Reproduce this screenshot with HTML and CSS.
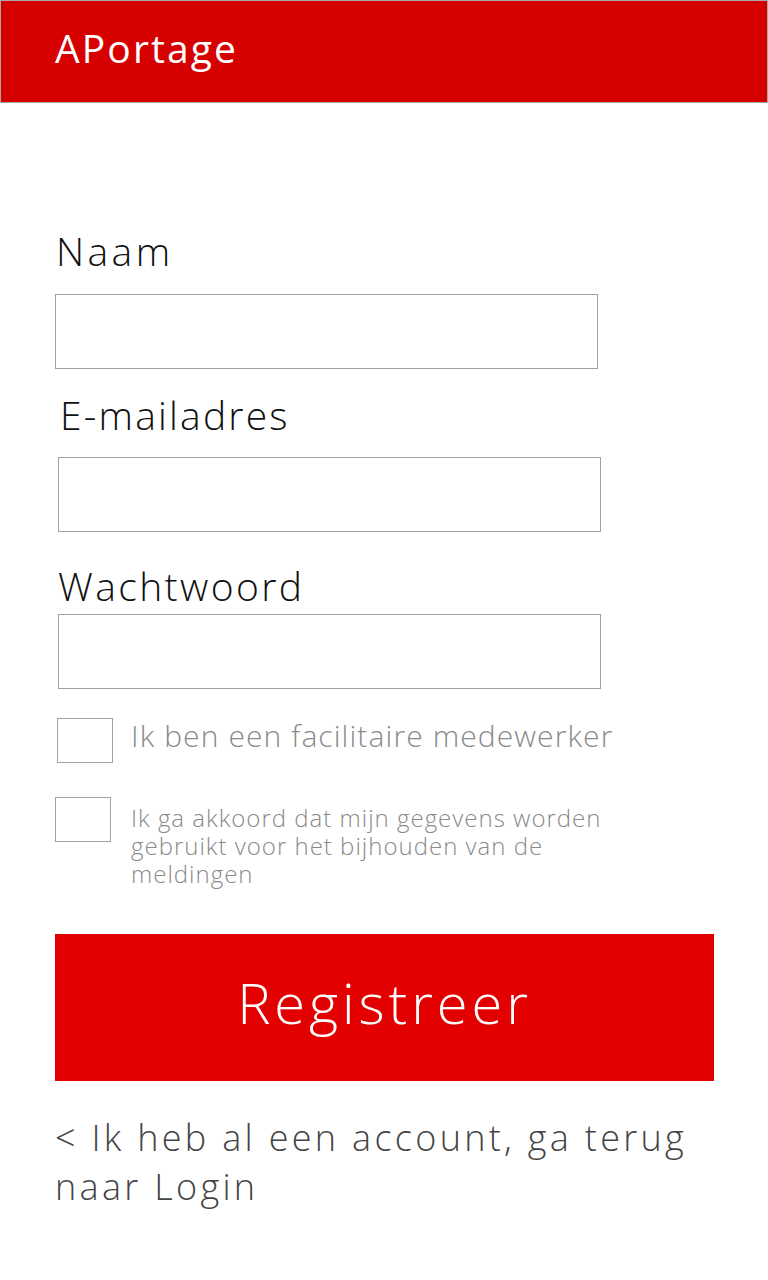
FILE: index.html
```html
<!DOCTYPE html>
<html lang="nl">
<head>
<meta charset="utf-8">
<title>APortage - Registreer</title>
<link rel="stylesheet" href="styles.css">
</head>
<body>
<header class="topbar">
  <span class="brand">APortage</span>
</header>
<main class="form">
  <label class="field-label label-naam">Naam</label>
  <div class="input input-naam"></div>
  <label class="field-label label-email">E-mailadres</label>
  <div class="input input-email"></div>
  <label class="field-label label-pass">Wachtwoord</label>
  <div class="input input-pass"></div>
  <div class="check-row check-one">
    <span class="box"></span>
    <span class="check-text big">Ik ben een facilitaire medewerker</span>
  </div>
  <div class="check-row check-two">
    <span class="box"></span>
    <span class="check-text small">Ik ga akkoord dat mijn gegevens worden gebruikt voor het bijhouden van de meldingen</span>
  </div>
  <div class="button">Registreer</div>
  <p class="back">&lt; Ik heb al een account, ga terug naar Login</p>
</main>
</body>
</html>
```
FILE: styles.css
```css
html, body {
  margin: 0;
  padding: 0;
  background: #ffffff;
}
body {
  width: 768px;
  font-family: "Open Sans", "Liberation Sans", sans-serif;
  font-weight: 300;
}
.topbar {
  box-sizing: border-box;
  height: 103px;
  background: #d70000;
  border: 1px solid #a8a8a8;
  display: flex;
  align-items: flex-start;
  padding: 25px 0 0 54px;
}
.brand {
  color: #ffffff;
  font-family: "Open Sans", sans-serif;
  font-weight: 400;
  font-size: 39px;
  line-height: 44px;
  letter-spacing: 2.1px;
}
.form {
  display: flex;
  flex-direction: column;
  align-items: flex-start;
  padding-left: 55px;
  padding-top: 126px;
}
.field-label {
  font-size: 39px;
  line-height: 44px;
  color: #111111;
  letter-spacing: 2.4px;
}
.label-naam { margin-left: 1px; letter-spacing: 3.4px; }
.label-email { margin-left: 5px; margin-top: 24px; letter-spacing: 2.2px; }
.label-pass { margin-left: 3px; margin-top: 32px; }
.input {
  box-sizing: border-box;
  width: 543px;
  height: 75px;
  border: 1px solid #a0a0a0;
  background: #ffffff;
}
.input-naam { margin-top: 21px; }
.input-email { margin-top: 20px; margin-left: 3px; }
.input-pass { margin-top: 6px; margin-left: 3px; }
.check-row {
  display: flex;
  align-items: flex-start;
  gap: 18px;
}
.check-one { margin-top: 29px; margin-left: 2px; }
.check-two { margin-top: 34px; }
.box {
  box-sizing: border-box;
  width: 56px;
  height: 45px;
  border: 1px solid #a0a0a0;
  flex: none;
}
.check-two .box { margin-right: 2px; }
.check-text {
  color: #8a8a8a;
}
.check-text.big {
  font-size: 30px;
  line-height: 36px;
  letter-spacing: 1.1px;
}
.check-text.small {
  font-size: 24px;
  line-height: 28px;
  letter-spacing: 1px;
  width: 500px;
  margin-top: 7px;
}
.button {
  box-sizing: border-box;
  width: 659px;
  height: 147px;
  margin-top: 46px;
  padding-bottom: 12px;
  background: #e30000;
  color: #ffffff;
  font-size: 56px;
  letter-spacing: 3.9px;
  display: flex;
  align-items: center;
  justify-content: center;
}
.back {
  margin: 32px 0 0 0;
  width: 660px;
  color: #444444;
  font-size: 36px;
  line-height: 49px;
  letter-spacing: 3.3px;
}
```
